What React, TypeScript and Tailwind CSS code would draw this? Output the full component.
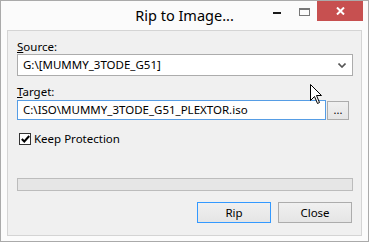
import React from 'react';

const font = { fontFamily: '"Noto Sans", "Open Sans", sans-serif' };

const Cursor = () => (
  <svg className="absolute left-[309px] top-[83px]" width="13" height="21" viewBox="0 0 13 21">
    <path
      d="M0.5 0.5 L0.5 16.5 L4.5 12.5 L7.5 19.5 L9.5 18.5 L6.5 11.5 L11.5 11.5 Z"
      fill="#fff"
      stroke="#000"
      strokeWidth="1"
      strokeLinejoin="miter"
    />
  </svg>
);

export default function App() {
  return (
    <div className="relative w-[369px] h-[242px] bg-[#fbfbfb] border border-[#aaaaaa] flex flex-col" style={font}>
      {/* title bar */}
      <div className="relative h-[29px] shrink-0">
        <div className="absolute inset-x-0 top-[4px] text-center text-[14.5px] text-black">Rip to Image...</div>
        <div className="absolute left-[272px] top-[11px] w-[8px] h-[2px] bg-[#1a1a1a]" />
        <div className="absolute left-[298px] top-[7px] w-[11px] h-[8px] border border-[#777] border-t-2" />
        <div className="absolute left-[316px] top-0 w-[46px] h-[20px] bg-[#c75050] flex items-center justify-center">
          <svg width="9" height="8" viewBox="0 0 9 8">
            <path d="M1 0.5 L8 7.5 M8 0.5 L1 7.5" stroke="#fff" strokeWidth="2" />
          </svg>
        </div>
      </div>

      {/* client area */}
      <div className="mx-[6px] mb-[5px] flex-1 border border-[#d4d4d4] bg-[#f0f0f0] pl-[9px] pr-[8px] flex flex-col text-[11.5px] text-black">
        <div className="mt-[8px] leading-[15px]">
          <span className="underline">S</span>ource:
        </div>
        <div className="h-[22px] border border-[#acacac] bg-white flex items-center pl-[5px] pr-[6px]">
          <span className="flex-1">G:\[MUMMY_3TODE_G51]</span>
          <svg width="8" height="5" viewBox="0 0 8 5">
            <path d="M0.5 0.5 L4 4 L7.5 0.5" stroke="#555" strokeWidth="1.6" fill="none" />
          </svg>
        </div>

        <div className="mt-[8px] leading-[15px]">
          <span className="underline">T</span>arget:
        </div>
        <div className="flex items-start gap-[1px] mt-[1px]">
          <div className="w-[309px] h-[20px] border border-[#569de5] bg-white flex items-center pl-[5px]">
            C:\ISO\MUMMY_3TODE_G51_PLEXTOR.iso
          </div>
          <div className="mt-[1px] w-[22px] h-[19px] border border-[#acacac] bg-gradient-to-b from-[#f0f0f0] to-[#e5e5e5] flex items-center justify-center text-[11px] leading-none pb-[2px]">
            ...
          </div>
        </div>

        <div className="mt-[12px] flex items-center gap-[3px] ml-[2px] h-[13px]">
          <div className="w-[12px] h-[12px] border border-[#333] bg-white flex items-center justify-center">
            <svg width="9" height="8" viewBox="0 0 9 8">
              <path d="M0.8 4 L3.3 6.5 L8.2 1" stroke="#000" strokeWidth="2" fill="none" />
            </svg>
          </div>
          <span className="leading-[13px]">Keep Protection</span>
        </div>

        <div className="mt-[33px] h-[13px] border border-[#bcbcbc] bg-[#e6e6e6]" />

        <div className="mt-[11px] flex justify-end gap-[7px] pr-[1px]">
          <div className="w-[74px] h-[21px] border border-[#3399ff] bg-gradient-to-b from-[#f0f0f0] to-[#e5e5e5] flex items-center justify-center">
            Rip
          </div>
          <div className="w-[74px] h-[21px] border border-[#acacac] bg-gradient-to-b from-[#f0f0f0] to-[#e5e5e5] flex items-center justify-center">
            Close
          </div>
        </div>
      </div>

      <Cursor />
    </div>
  );
}
